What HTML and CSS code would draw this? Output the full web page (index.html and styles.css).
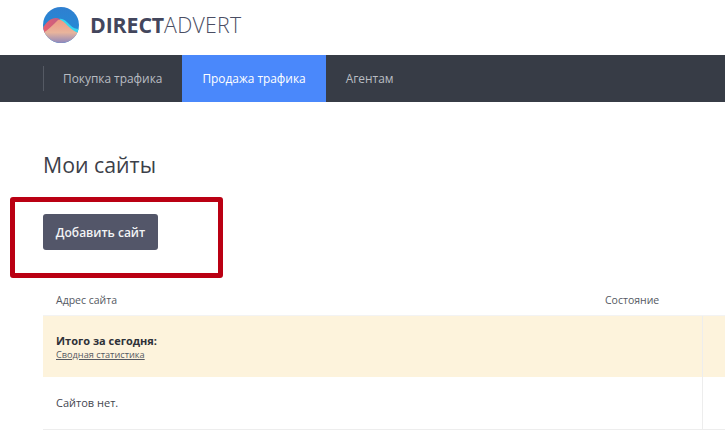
FILE: index.html
```html
<!DOCTYPE html>
<html lang="ru">
<head>
<meta charset="utf-8">
<title>Мои сайты</title>
<link rel="stylesheet" href="styles.css">
</head>
<body>
<header class="top">
  <svg class="logo" width="36" height="36" viewBox="0 0 36 36" aria-hidden="true">
    <defs>
      <clipPath id="c"><circle cx="18" cy="18" r="18"/></clipPath>
      <linearGradient id="sky" x1="0" y1="0" x2="0" y2="1"><stop offset="0" stop-color="#2f7fd0"/><stop offset="1" stop-color="#1f8fd8"/></linearGradient>
      <linearGradient id="hill" x1="0" y1="0" x2="0" y2="1"><stop offset="0" stop-color="#ef9a84"/><stop offset=".55" stop-color="#e8b49c"/><stop offset="1" stop-color="#8f88bc"/></linearGradient>
      <linearGradient id="hillb" x1="0" y1="0" x2="1" y2="0"><stop offset="0" stop-color="#ec5f6c"/><stop offset="1" stop-color="#b55f8c"/></linearGradient>
    </defs>
    <g clip-path="url(#c)">
      <rect width="36" height="36" fill="url(#sky)"/>
      <path d="M16 12C20 11 23 14 27 18C30 21 33 22 36 22V27H20Z" fill="#35d6ee"/>
      <path d="M0 21C3 15 8 11 13 11C16 11 18 13 20 16L8 26H0Z" fill="url(#hillb)"/>
      <path d="M0 26C5 23 10 18 15 13C18 12 22 16 25 19C28 22 32 25 36 26V36H0Z" fill="url(#hill)"/>
    </g>
  </svg>
  <div class="brand"><b>DIRECT</b><span>ADVERT</span></div>
</header>
<nav class="nav">
  <div class="nav-items">
    <a class="nav-item">Покупка трафика</a>
    <a class="nav-item active">Продажа трафика</a>
    <a class="nav-item">Агентам</a>
  </div>
</nav>
<main class="main">
  <h1 class="title">Мои сайты</h1>
  <button class="add">Добавить сайт</button>
  <div class="frame"></div>
  <div class="table">
    <div class="row head"><div class="c1">Адрес сайта</div><div class="c2">Состояние</div><div class="c3"></div></div>
    <div class="row total"><div class="c1"><strong>Итого за сегодня:</strong><a class="stats">Сводная статистика</a></div><div class="c2"></div><div class="c3"></div></div>
    <div class="row empty"><div class="c1">Сайтов нет.</div><div class="c2"></div><div class="c3"></div></div>
  </div>
</main>
</body>
</html>
```
FILE: styles.css
```css
html, body { margin: 0; padding: 0; }
body {
  width: 725px;
  height: 431px;
  overflow: hidden;
  background: #fff;
  font-family: "Open Sans", "Liberation Sans", sans-serif;
  color: #33373f;
}
.top {
  height: 55px;
  box-sizing: border-box;
  padding: 7px 0 0 43px;
  display: flex;
  align-items: flex-start;
  gap: 11px;
}
.logo { flex: none; }
.brand {
  font-family: "Open Sans", sans-serif;
  font-size: 21.3px;
  line-height: 36px;
  letter-spacing: .25px;
  color: #4a4d63;
  white-space: nowrap;
}
.brand b { font-weight: 700; color: #43465c; letter-spacing: -.1px; }
.brand span { font-weight: 300; }
.nav {
  height: 47px;
  background: #373c46;
  padding-left: 43px;
}
.nav-items { display: flex; height: 47px; align-items: stretch; position: relative; }
.nav-items::before {
  content: "";
  position: absolute;
  left: 0;
  top: 11px;
  height: 25px;
  width: 1px;
  background: #555a64;
}
.nav-item {
  padding: 0 20px;
  font-size: 11.9px;
  line-height: 47px;
  color: #b9bcc2;
}
.nav-item.active { background: #4a88fb; color: #fff; }
.main { position: relative; padding: 49px 0 0 43px; height: 282px; box-sizing: border-box; }
.title {
  margin: 0;
  font-size: 21.3px;
  line-height: 28px;
  font-weight: 400;
  color: #3c4049;
}
.add {
  display: block;
  margin-top: 35px;
  width: 115px;
  height: 36px;
  padding: 0;
  border: 0;
  border-radius: 3px;
  background: #535669;
  color: #f2f3f5;
  font-family: inherit;
  font-size: 12px;
  font-weight: 600;
}
.frame {
  position: absolute;
  left: 10px;
  top: 95px;
  width: 203px;
  height: 71px;
  border: 5px solid #ba0013;
  border-radius: 3px;
}
.table { margin-top: 36px; width: 700px; }
.row { display: grid; grid-template-columns: 562px 97px 41px; }
.head { height: 29px; font-size: 10.5px; line-height: 29px; color: #555962; }
.head .c1 { padding-left: 13px; }
.total { height: 62px; background: #fdf3dc; border-top: 1px solid #f3f3f3; box-sizing: border-box; }
.total .c1 { padding: 18px 0 0 13px; font-size: 11px; line-height: 14px; }
.total strong { display: block; font-weight: 700; color: #2e3138; }
.stats { display: block; font-size: 9.2px; line-height: 13px; color: #555962; text-decoration: underline; }
.total .c3, .empty .c3 { border-left: 1px solid #ededed; }
.empty { height: 53px; border-bottom: 1px solid #ededed; box-sizing: border-box; }
.empty .c1 { padding-left: 13px; font-size: 11px; line-height: 52px; color: #44474f; }
```
